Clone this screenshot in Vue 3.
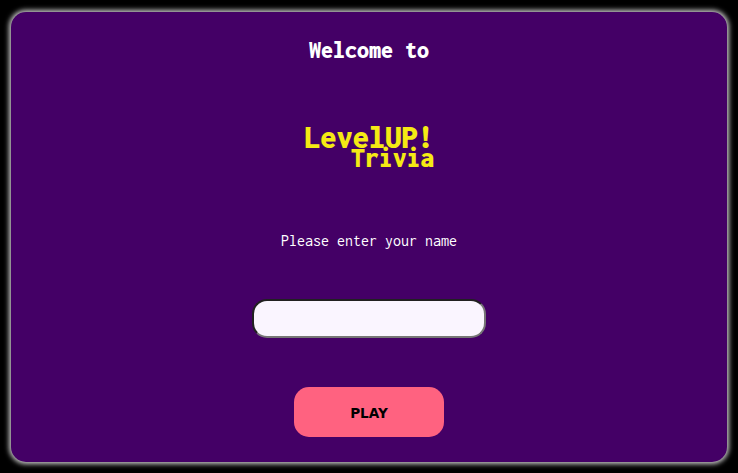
<script setup>
import { ref } from 'vue'

const name = ref('')
</script>

<template>
  <main class="screen">
    <form class="card" @submit.prevent>
      <h2 class="welcome">Welcome to</h2>
      <h1 class="logo">
        <span class="level">LevelUP!</span>
        <span class="trivia">Trivia</span>
      </h1>
      <label class="prompt" for="player">Please enter your name</label>
      <input id="player" v-model="name" class="field" type="text" />
      <button class="play" type="submit">PLAY</button>
    </form>
  </main>
</template>

<style>
body {
  margin: 0;
  background: #000;
}
</style>

<style scoped>
.screen {
  box-sizing: border-box;
  height: 473px;
  padding: 12px 11px 11px;
  background: #000;
  overflow: hidden;
}
.card {
  box-sizing: border-box;
  height: 450px;
  display: flex;
  flex-direction: column;
  align-items: center;
  padding-top: 25px;
  border-radius: 15px;
  background: #440066;
  box-shadow: 0 0 5px 2px #ccc;
  color: #fff;
  font-family: Inconsolata, "DejaVu Sans Mono", monospace;
}
.welcome {
  margin: 0;
  font-size: 24px;
  font-weight: 900;
  line-height: 26px;
}
.logo {
  display: flex;
  flex-direction: column;
  width: 132px;
  margin: 60px 0 0;
  color: #f5ea14;
  font-weight: 900;
}
.level {
  margin-left: 1px;
  font-size: 32.5px;
  line-height: 28px;
}
.trivia {
  margin: -7px 0 0 48px;
  font-size: 27.8px;
  line-height: 28px;
}
.prompt {
  margin-top: 59px;
  font-size: 16px;
  line-height: 20px;
}
.field {
  box-sizing: border-box;
  width: 234px;
  height: 39px;
  margin-top: 48px;
  padding: 0 12px;
  border: 2px inset #767676;
  border-radius: 15px;
  background: #faf5ff;
  font: inherit;
  outline: none;
}
.play {
  width: 150px;
  height: 50px;
  margin-top: 49px;
  padding: 3px 0 0;
  border: 0;
  border-radius: 15px;
  background: #ff6280;
  color: #000;
  font: 700 13.6px/47px "DejaVu Sans", sans-serif;
}
</style>
